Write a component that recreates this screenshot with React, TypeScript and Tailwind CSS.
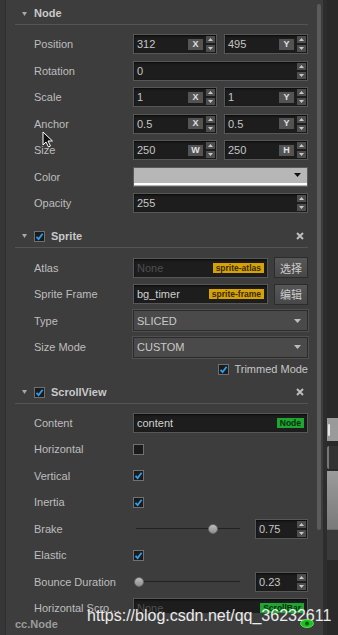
import React from 'react';

const Tri = ({ dir, color = '#c8c8c8' }: { dir: 'up' | 'down'; color?: string }) => (
  <svg width="5" height="3" viewBox="0 0 5 3">
    <path d={dir === 'up' ? 'M0 3 L2.5 0 L5 3 Z' : 'M0 0 L5 0 L2.5 3 Z'} fill={color} />
  </svg>
);

const Spinner = () => (
  <div className="flex flex-col gap-[2px] mr-[1px] ml-[3px]">
    <div className="w-[9px] h-[7px] bg-[#4d4d4d] flex items-center justify-center">
      <Tri dir="up" />
    </div>
    <div className="w-[9px] h-[7px] bg-[#4d4d4d] flex items-center justify-center">
      <Tri dir="down" />
    </div>
  </div>
);

const Box = ({ children, className = '' }: { children?: React.ReactNode; className?: string }) => (
  <div
    className={`h-[20px] border border-[#575757] bg-[#1d1d1d] flex items-center shadow-[inset_0_1px_2px_rgba(0,0,0,0.7)] ${className}`}
  >
    {children}
  </div>
);

const NumField = ({ value, axis, className = '' }: { value: string; axis?: string; className?: string }) => (
  <Box className={className}>
    <span className="pl-[3px] flex-1 text-[#c6c6c6]">{value}</span>
    {axis && (
      <span className="w-[15px] h-[11px] bg-[#535353] text-[#e0e0e0] text-[9px] font-bold flex items-center justify-center leading-none">
        {axis}
      </span>
    )}
    <Spinner />
  </Box>
);

const Tag = ({ text, color }: { text: string; color: 'gold' | 'green' }) => (
  <span
    className={`h-[10px] px-[3px] mr-[3px] text-[8.5px] font-bold leading-none flex items-center ${
      color === 'gold' ? 'bg-[#d6a200] text-[#3a2b00]' : 'bg-[#1fa532] text-[#06300c]'
    }`}
  >
    {text}
  </span>
);

const Check = ({ on }: { on: boolean }) => (
  <div className="w-[11px] h-[11px] border border-[#707070] bg-[#1b1b1b] flex items-center justify-center shrink-0">
    {on && (
      <svg width="9" height="9" viewBox="0 0 9 9">
        <path d="M1.5 4.8 L3.6 7 L7.6 1.8" stroke="#2b9ff5" strokeWidth="1.8" fill="none" />
      </svg>
    )}
  </div>
);

const Row = ({ label, children, narrow }: { label: string; children?: React.ReactNode; narrow?: boolean }) => (
  <div className="h-[26.5px] flex items-center">
    <span
      className={`w-[99px] shrink-0 text-[#bdbdbd] whitespace-nowrap overflow-hidden text-ellipsis ${
        narrow ? 'pr-[12px]' : ''
      }`}
    >
      {label}
    </span>
    <div className="w-[175px] flex items-center">{children}</div>
  </div>
);

const Header = ({ title, check, close }: { title: string; check?: boolean; close?: boolean }) => (
  <div className="ml-[9px] w-[293px] h-[22px] border-b border-[#545454] flex items-center pl-[7px] pr-[3px]">
    <svg width="5" height="4" viewBox="0 0 5 4" className="shrink-0">
      <path d="M0 0 L5 0 L2.5 4 Z" fill="#a8a8a8" />
    </svg>
    <div className="ml-[7px] flex items-center">
      {check && (
        <div className="mr-[6px]">
          <Check on />
        </div>
      )}
      <span className="font-bold text-[#c9c9c9]">{title}</span>
    </div>
    {close && (
      <svg width="8" height="8" viewBox="0 0 8 8" className="ml-auto mr-[1px]">
        <path d="M1 1 L7 7 M7 1 L1 7" stroke="#bdbdbd" strokeWidth="2" />
      </svg>
    )}
  </div>
);

const Slider = ({ pos, value }: { pos: number; value: string }) => (
  <>
    <div className="relative w-[104px] ml-[3px] h-[12px]">
      <div className="absolute left-0 right-0 top-[5.5px] h-[1px] bg-[#222]" />
      <div
        className="absolute top-[1px] w-[10px] h-[10px] rounded-full bg-gradient-to-b from-[#bdbdbd] to-[#8f8f8f] border border-[#6a6a6a]"
        style={{ left: pos - 5 }}
      />
    </div>
    <NumField value={value} className="ml-auto w-[53px]" />
  </>
);

const Button = ({ text }: { text: string }) => (
  <div className="ml-auto w-[34px] h-[21px] border border-[#2c2c2c] bg-gradient-to-b from-[#575757] to-[#484848] text-[#cccccc] text-[11px] flex items-center justify-center font-['Noto_Sans_CJK_SC',sans-serif]">
    {text}
  </div>
);

const Select = ({ value }: { value: string }) => (
  <div className="w-full h-[21px] border border-[#2b2b2b] bg-[#4a4a4a] flex items-center shadow-[0_0_0_1px_#505050]">
    <span className="pl-[3px] flex-1 text-[#c9c9c9]">{value}</span>
    <svg width="7" height="4" viewBox="0 0 7 4" className="mr-[6px]">
      <path d="M0 0 L7 0 L3.5 4 Z" fill="#bdbdbd" />
    </svg>
  </div>
);

export default function App() {
  return (
    <div className="relative w-[338px] h-[635px] overflow-hidden flex bg-[#3d3d3d] font-['Liberation_Sans',Arial,sans-serif] text-[11px]">
      <div className="w-[6px] bg-[#363636] border-r border-[#2f2f2f]" />
      <div className="w-[317px] flex flex-col">
        <div className="h-[613px] overflow-hidden flex">
          <div className="w-[302px] pt-[3px]">
            <Header title="Node" />
            <div className="pl-[28px] pt-[6px]">
              <Row label="Position">
                <NumField value="312" axis="X" className="w-[84px]" />
                <NumField value="495" axis="Y" className="w-[84px] ml-[7px]" />
              </Row>
              <Row label="Rotation">
                <NumField value="0" className="w-full" />
              </Row>
              <Row label="Scale">
                <NumField value="1" axis="X" className="w-[84px]" />
                <NumField value="1" axis="Y" className="w-[84px] ml-[7px]" />
              </Row>
              <Row label="Anchor">
                <NumField value="0.5" axis="X" className="w-[84px]" />
                <NumField value="0.5" axis="Y" className="w-[84px] ml-[7px]" />
              </Row>
              <Row label="Size">
                <NumField value="250" axis="W" className="w-[84px]" />
                <NumField value="250" axis="H" className="w-[84px] ml-[7px]" />
              </Row>
              <Row label="Color">
                <div className="w-full h-[20px] border border-[#5a5a5a] bg-[#b7b7b7] flex flex-col">
                  <div className="flex-1 flex items-center justify-end pr-[6px]">
                    <svg width="7" height="4" viewBox="0 0 7 4">
                      <path d="M0 0 L7 0 L3.5 4 Z" fill="#111" />
                    </svg>
                  </div>
                  <div className="h-[2px] bg-white mb-[1px]" />
                </div>
              </Row>
              <Row label="Opacity">
                <NumField value="255" className="w-full" />
              </Row>
            </div>

            <div className="mt-[9px]">
              <Header title="Sprite" check close />
            </div>
            <div className="pl-[28px] pt-[7px]">
              <Row label="Atlas">
                <Box className="w-[135px]">
                  <span className="pl-[3px] flex-1 text-[#4f4f4f]">None</span>
                  <Tag text="sprite-atlas" color="gold" />
                </Box>
                <Button text="选择" />
              </Row>
              <Row label="Sprite Frame">
                <Box className="w-[135px]">
                  <span className="pl-[3px] flex-1 text-[#d0d0d0]">bg_timer</span>
                  <Tag text="sprite-frame" color="gold" />
                </Box>
                <Button text="编辑" />
              </Row>
              <Row label="Type">
                <Select value="SLICED" />
              </Row>
              <Row label="Size Mode">
                <Select value="CUSTOM" />
              </Row>
              <div className="h-[18px] flex items-center justify-end">
                <Check on />
                <span className="ml-[5px] text-[#c6c6c6]">Trimmed Mode</span>
              </div>
            </div>

            <div className="mt-[3px]">
              <Header title="ScrollView" check close />
            </div>
            <div className="pl-[28px] pt-[6px]">
              <Row label="Content">
                <Box className="w-full">
                  <span className="pl-[3px] flex-1 text-[#d0d0d0]">content</span>
                  <Tag text="Node" color="green" />
                </Box>
              </Row>
              <Row label="Horizontal">
                <Check on={false} />
              </Row>
              <Row label="Vertical">
                <Check on />
              </Row>
              <Row label="Inertia">
                <Check on />
              </Row>
              <Row label="Brake">
                <Slider pos={77} value="0.75" />
              </Row>
              <Row label="Elastic">
                <Check on />
              </Row>
              <Row label="Bounce Duration">
                <Slider pos={3} value="0.23" />
              </Row>
              <Row label="Horizontal Scrollbar" narrow>
                <Box className="w-full">
                  <span className="pl-[3px] flex-1 text-[#4f4f4f]">None</span>
                  <Tag text="ScrollBar" color="green" />
                </Box>
              </Row>
            </div>
          </div>
          <div className="ml-[9px] mt-[4px] w-[4px] h-[526px] rounded-full bg-[#5b5b5b]" />
        </div>
        <div className="h-[22px] flex items-center pl-[9px] font-bold text-[#9b9b9b]">cc.Node</div>
      </div>
      <div className="w-[4px] bg-[#2d2d2d]" />
      <div className="w-[11px] bg-[#292929] flex flex-col">
        <div className="h-[418px]" />
        <div className="h-[23px] bg-[#9a9a9a] flex items-center">
          <div className="w-[2px] h-[12px] ml-[1px] rounded bg-[#e6e6e6]" />
        </div>
        <div className="h-[5px]" />
        <div className="h-[23px] bg-[#333] border-l-2 border-[#777] rounded-l-[2px]" />
        <div className="h-[2px]" />
        <div className="h-[58px] bg-gradient-to-b from-[#9b9b9b] to-[#7a7a7a]" />
        <div className="h-[1px] bg-[#6a6a6a]" />
        <div className="h-[30px] bg-[#3a3a3a]" />
      </div>

      <svg width="12" height="17" viewBox="0 0 12 17" className="absolute left-[42px] top-[131px]">
        <path d="M1 1 L1 14 L4 11 L6.5 16 L8.5 15 L6 10 L10.5 10 Z" fill="#111" stroke="#fff" strokeWidth="1" />
      </svg>

      <span className="absolute left-[87px] top-[608px] text-[16px] leading-none text-white/90 whitespace-nowrap">
        https://blog.csdn.net/qq_36232611
      </span>
      <svg width="14" height="9" viewBox="0 0 14 9" className="absolute left-[300px] top-[619px]">
        <ellipse cx="7" cy="4.5" rx="6.5" ry="4" fill="#19c21c" stroke="#6cf06c" strokeWidth="0.8" />
        <circle cx="7" cy="4.5" r="2" fill="#0b5a0b" />
      </svg>
    </div>
  );
}
